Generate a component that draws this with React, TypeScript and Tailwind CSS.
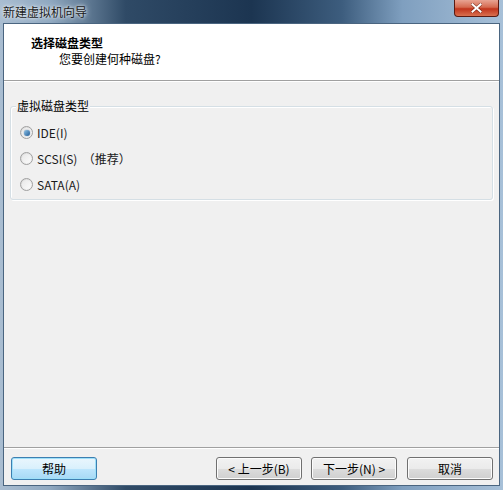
import React from "react";

const font = { fontFamily: '"Noto Sans CJK SC", "Liberation Sans", sans-serif' };

function Radio({ checked }: { checked?: boolean }) {
  return (
    <span className="relative inline-flex h-[13px] w-[13px] items-center justify-center rounded-full border border-[#a0a0a0] bg-gradient-to-br from-[#d8d8d8] to-[#f8f8f8]">
      <span className="h-[9px] w-[9px] rounded-full bg-gradient-to-br from-[#e8e8e8] to-[#fbfbfb]" />
      {checked && (
        <span className="absolute h-[6px] w-[6px] rounded-full bg-gradient-to-br from-[#8ec3e8] to-[#1f5d96] shadow-[0_0_1px_#0d3b6b]" />
      )}
    </span>
  );
}

function Btn({ children, focus }: { children: React.ReactNode; focus?: boolean }) {
  return (
    <button
      className={
        "h-[23px] w-[86px] rounded-[3px] border text-[12px] leading-none text-black " +
        (focus
          ? "border-[#3c7fb1] bg-[linear-gradient(#eaf6fd_0%,#d9f0fc_50%,#bee6fd_50%,#a7d9f5_100%)] shadow-[inset_0_0_0_1px_#9ee0f9]"
          : "border-[#707070] bg-[linear-gradient(#f2f2f2_0%,#ebebeb_50%,#dddddd_50%,#cfcfcf_100%)] shadow-[inset_0_0_0_1px_#fcfcfc]")
      }
    >
      {children}
    </button>
  );
}

export default function App() {
  const options = [
    { label: "IDE(I)", checked: true },
    { label: "SCSI(S)  （推荐）" },
    { label: "SATA(A)" },
  ];
  return (
    <div
      style={font}
      className="flex h-[490px] w-[503px] flex-col overflow-hidden bg-[linear-gradient(90deg,#a9bdd1_0%,#8fa8c0_10%,#2f4a66_25%,#1c3551_50%,#3d5d7e_68%,#7f9fbf_80%,#a7c0d8_100%)] text-[12px] text-black"
    >
      <div className="flex h-[23px] shrink-0 items-start justify-between pl-[3px]">
        <span className="mt-[4px] text-[12px] leading-[15px] text-[#1a1a1a] [text-shadow:0_0_6px_#dfe8f0,0_0_3px_#ffffff]">
          新建虚拟机向导
        </span>
        <div className="mr-[4px] flex h-[17px] w-[45px] items-center justify-center rounded-b-[4px] border border-t-0 border-[#5a1a12] bg-[linear-gradient(#e8a493_0%,#d56a50_45%,#c1341c_55%,#d9704f_100%)]">
          <svg width="11" height="10" viewBox="0 0 11 10">
            <path d="M1.5 1.5 L9.5 8.5 M9.5 1.5 L1.5 8.5" stroke="#3a0a00" strokeWidth="3.2" strokeLinecap="square" opacity="0.5" />
            <path d="M1.5 1.5 L9.5 8.5 M9.5 1.5 L1.5 8.5" stroke="#ffffff" strokeWidth="2" strokeLinecap="square" />
          </svg>
        </div>
      </div>
      <div className="mx-[3px] mb-[4px] flex flex-1 flex-col border border-[#4a6580] bg-[#f0f0f0]">
        <div className="h-[57px] shrink-0 border-b border-[#a0a0a0] bg-white pl-[27px] pt-[11px]">
          <div className="text-[12px] font-bold leading-[16px]">选择磁盘类型</div>
          <div className="pl-[28px] text-[12px] leading-[16px]">您要创建何种磁盘?</div>
        </div>
        <div className="flex-1 border-t border-white px-[6px] pt-[24px]">
          <div className="relative h-[94px] rounded-[3px] border border-[#d5dfe5] shadow-[inset_1px_1px_0_#ffffff,1px_1px_0_#ffffff]">
            <span className="absolute -top-[8px] left-[5px] bg-[#f0f0f0] px-[1px] leading-[14px]">虚拟磁盘类型</span>
            <div className="flex flex-col gap-[11px] pl-[9px] pt-[18px]">
              {options.map((o) => (
                <div key={o.label} className="flex h-[15px] items-center gap-[4px]">
                  <Radio checked={o.checked} />
                  <span className="whitespace-pre leading-[15px] text-[#1a1a1a]">{o.label}</span>
                </div>
              ))}
            </div>
          </div>
        </div>
        <div className="h-[38px] shrink-0 border-t border-[#a0a0a0] shadow-[inset_0_1px_0_#ffffff]">
          <div className="flex items-center pl-[7px] pr-[6px] pt-[9px]">
            <Btn focus>帮助</Btn>
            <div className="ml-auto flex gap-[9px]">
              <Btn>&lt; 上一步(B)</Btn>
              <Btn>下一步(N) &gt;</Btn>
              <div className="ml-[1px]">
                <Btn>取消</Btn>
              </div>
            </div>
          </div>
        </div>
      </div>
    </div>
  );
}
